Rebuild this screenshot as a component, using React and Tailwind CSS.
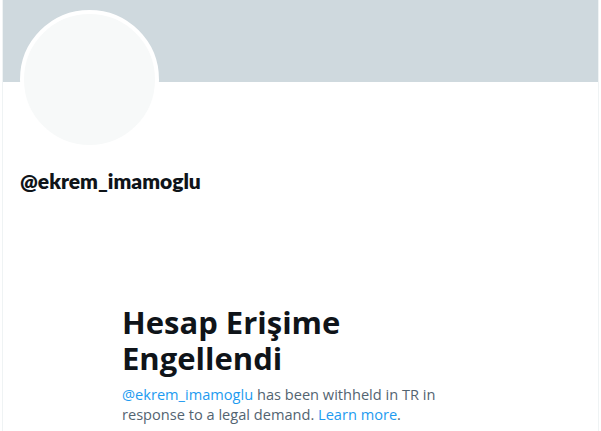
export default function App() {
  return (
    <div className="h-[431px] w-[601px] overflow-hidden bg-white" style={{ fontFamily: '"Open Sans", "Noto Sans", sans-serif' }}>
      <div className="mx-[2px] h-full border-x border-[#eff3f4]">
        {/* BANNER */}
        <div className="h-[82px] bg-[#cfd9de]" />

        {/* AVATAR + HANDLE */}
        <div className="px-[17px]">
          <div className="-mt-[72px] h-[139px] w-[139px] rounded-full border-4 border-white bg-[#f7f9f9]" />
          <div className="mt-[20px] text-[21px] font-bold leading-6 text-[#0f1419]" style={{ fontFamily: "Lato, sans-serif", fontWeight: 800 }}>
            @ekrem_imamoglu
          </div>
        </div>

        {/* WITHHELD NOTICE */}
        <div className="ml-[119px] mt-[111px] w-[340px]">
          <h1 className="text-[31px] font-bold leading-[36px] text-[#0f1419]">
            Hesap Erişime Engellendi
          </h1>
          <p className="mt-2 text-[14.6px] leading-5 text-[#536471]">
            <span className="text-[#1d9bf0]">@ekrem_imamoglu</span> has been withheld in TR in response to a legal demand.{" "}
            <span className="text-[#1d9bf0]">Learn more</span>.
          </p>
        </div>
      </div>
    </div>
  );
}
